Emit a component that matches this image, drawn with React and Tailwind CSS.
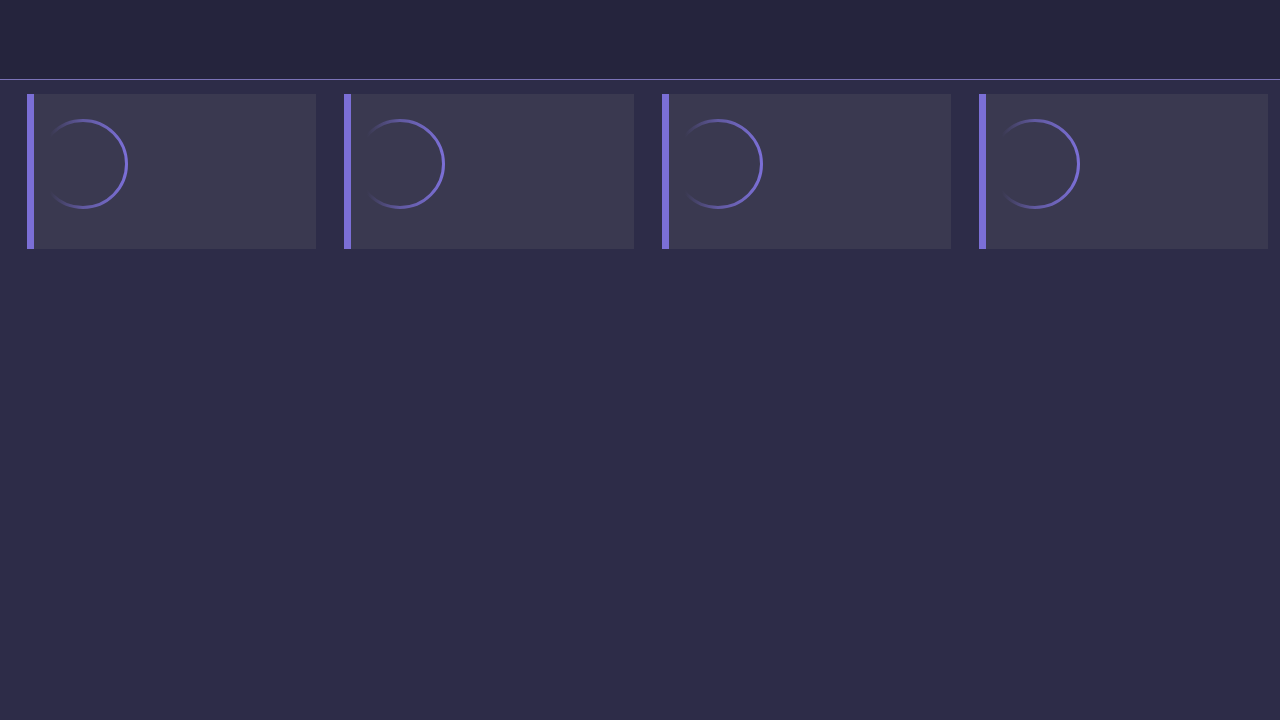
const Spinner = ({ id }) => (
  <svg width="96" height="96" viewBox="0 0 96 96" className="block">
    <defs>
      <linearGradient id={id} x1="0" y1="0" x2="1" y2="0">
        <stop offset="0.12" stopColor="#7b6fd6" stopOpacity="0" />
        <stop offset="0.5" stopColor="#7b6fd6" stopOpacity="0.6" />
        <stop offset="1" stopColor="#7b6fd6" stopOpacity="1" />
      </linearGradient>
    </defs>
    <circle cx="48" cy="48" r="43.5" fill="none" stroke={`url(#${id})`} strokeWidth="3" />
  </svg>
);

const Card = ({ i }) => (
  <div className="h-[155px] bg-[#3a3950] border-l-[7px] border-[#7b6fd6] pl-[1px] pt-[22px]">
    <Spinner id={`spin-${i}`} />
  </div>
);

export default function App() {
  return (
    <div className="min-h-screen bg-[#2d2c48]" style={{ fontFamily: '"Liberation Sans", sans-serif' }}>
      <header className="h-20 bg-[#25243d] border-b border-[#7a72b8]" />
      <main className="grid grid-cols-4 gap-[28px] pl-[27px] pr-[12px] pt-[14px]">
        {[0, 1, 2, 3].map((i) => (
          <Card key={i} i={i} />
        ))}
      </main>
    </div>
  );
}
